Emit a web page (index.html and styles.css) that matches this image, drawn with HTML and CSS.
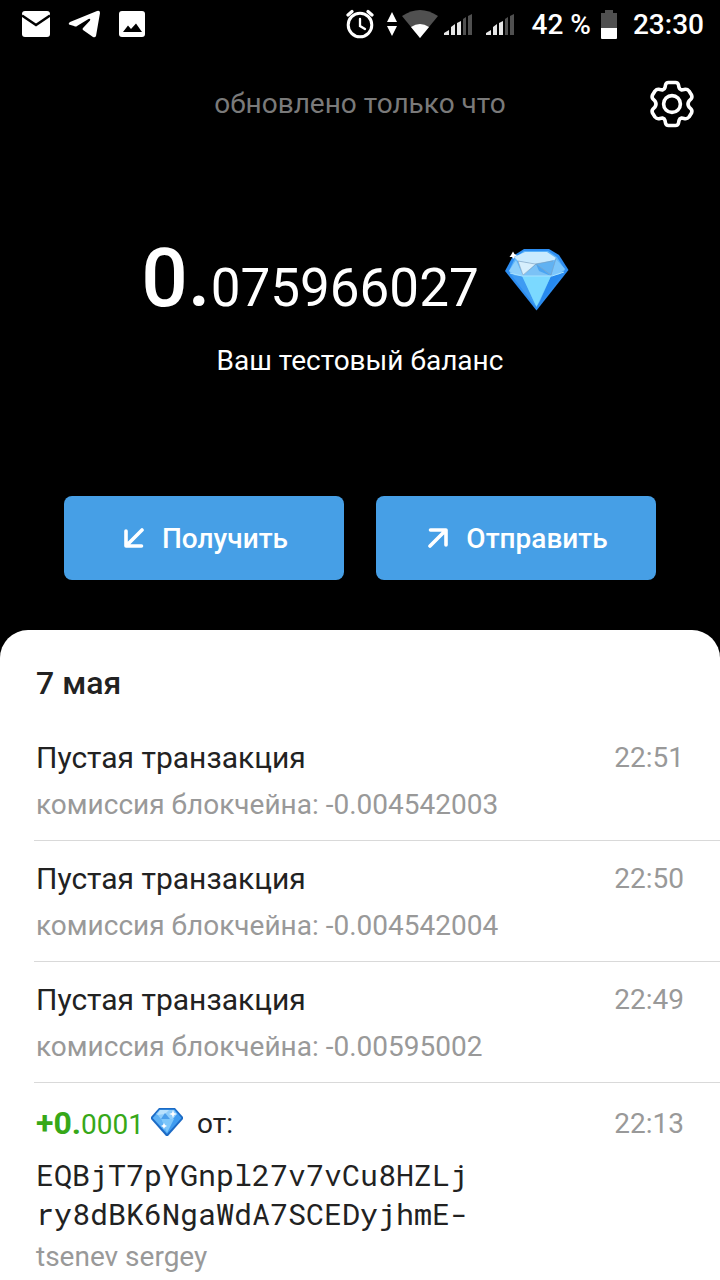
FILE: index.html
```html
<!DOCTYPE html>
<html lang="ru">
<head>
<meta charset="utf-8">
<meta name="viewport" content="width=device-width, initial-scale=1">
<title>Кошелёк</title>
<link rel="stylesheet" href="styles.css">
</head>
<body>
<header class="status">
  <div class="status-group status-left">
    <svg width="28" height="26" viewBox="0 0 28 26"><rect width="28" height="26" rx="3" fill="#fff"/><path d="M0 4.500 14 14 28 4.500" fill="none" stroke="#000" stroke-width="2.500"/></svg>
    <svg width="33" height="28" viewBox="0 0 33 28"><path fill="#fff" d="M2 12 29 1Q32 0 32 3L28 26Q27 28 25 27L15 20Q14 19 15 18L22 10.500Q23 8 20.500 9L9 16Q8 17 6 16L1 14.500Q0 13 2 12Z"/></svg>
    <svg width="26" height="26" viewBox="0 0 26 26"><rect width="26" height="26" rx="3" fill="#fff"/><path d="M4 21 9 14.500 12 18 17 12.500 23 21Z"/></svg>
  </div>
  <div class="status-group status-right">
    <svg width="28" height="30" viewBox="0 0 28 30" fill="none" stroke="#fff" stroke-linecap="round"><circle cx="14" cy="16" r="11.800" stroke-width="3"/><path stroke-width="2.300" d="M14 10V17L19 20"/><path stroke-width="3.200" d="M2 6 6 2.500M22 2.500 26 6"/></svg>
    <svg class="arrows" width="10" height="24" viewBox="0 0 10 24" fill="#fff"><path d="M0 10 5 0 10 10ZM0 14H10L5 24Z"/></svg>
    <svg class="wifi" width="36" height="28" viewBox="0 0 36 28"><path fill="#505050" d="M0 6Q18-6 36 6L18 28Z"/><path fill="#fff" d="M9 17Q18 11 27 17L18 28Z"/></svg>
    <svg width="28" height="21" viewBox="0 0 28 21"><path fill="#e6e6e6" d="M0 21V19L5 16V21ZM7 21V13L11 10V21ZM13 21V9L17 7V21Z"/><path fill="#505050" d="M19 21V5L22 3V21ZM24 21V2L28 0V21Z"/></svg>
    <svg class="signal" width="28" height="21" viewBox="0 0 28 21"><path fill="#e6e6e6" d="M0 21V19L5 16V21ZM7 21V13L11 10V21ZM13 21V9L17 7V21Z"/><path fill="#505050" d="M19 21V5L22 3V21ZM24 21V2L28 0V21Z"/></svg>
    <span class="percent">42 %</span>
    <svg width="16" height="29" viewBox="0 0 16 29"><path fill="#505050" d="M4 0H12V3H16V18H0V3H4Z"/><path fill="#fff" d="M0 18H16V28Q16 29 15 29H1Q0 29 0 28Z"/></svg>
    <time class="clock">23:30</time>
  </div>
</header>

<main class="wallet">
  <div class="topbar">
    <p class="updated">обновлено только что</p>
    <button class="settings" type="button" aria-label="Настройки">
      <svg width="48" height="48" viewBox="0 0 48 48" fill="none" stroke="#fff" stroke-width="3.600" stroke-linejoin="round"><circle cx="24" cy="24" r="8.400"/><path d="M20.500 2.500H27.500Q30 2.500 30.500 5L31 7.500Q31.500 9.500 33.500 10L36 9.500Q39 8.500 41 11L43.500 15Q44.500 17.500 43 19L41 21Q39 24 41 27L43 29Q44.500 30.500 43.500 33L41 37Q39 39.500 36 38.500L33.500 38Q31.500 38.500 31 40.500L30.500 43Q30 45.500 27.500 45.500H20.500Q18 45.500 17.500 43L17 40.500Q16.500 38.500 14.500 38L12 38.500Q9 39.500 7 37L4.500 33Q3.500 30.500 5 29L7 27Q9 24 7 21L5 19Q3.500 17.500 4.500 15L7 11Q9 8.500 12 9.500L14.500 10Q16.500 9.500 17 7.500L17.500 5Q18 2.500 20.500 2.500Z"/></svg>
    </button>
  </div>

  <section class="balance">
    <div class="amount">
      <span class="amount-text"><strong>0.</strong>075966027</span>
      <svg class="gem-large" viewBox="0 0 64 62">
        <path fill="#2d8df0" d="M19 0H44L54 6 63.500 21 31.500 61.500 0 22 8 7Z"/>
        <path fill="#5db4fa" d="M19 2H43L52 8 60 21 31.500 57 4 22 10 9Z"/>
        <path fill="#8fd0fb" d="M11 11 18 27 10 26 4 22Z"/>
        <path fill="#3d9bf3" d="M4 23 10 26.500 18 27 31 58Z"/>
        <path fill="#2689ee" d="M46 27 60 21.500 31.500 60Z"/>
        <path fill="#7bd9ff" d="M17 27H46L31.500 58Z"/>
        <path fill="#7cc6fb" d="M51 10 60 20 55 25 46 27Z"/>
        <path fill="#c9eafe" d="M9 8 20 3H42L51 9 48 13 30 15 13 12Z"/>
        <path fill="#d6effd" d="M13 12 31 15 18 27Z"/>
        <path fill="#61b2f2" d="M31 15 49 11 46 27Z"/>
        <path fill="#4ba5f2" d="M31 15 46 27H18Z"/>
        <path fill="#7bc2f6" d="M31 15 34 22 46 27H18Z"/>
        <path fill="none" stroke="#a8e2ff" d="M5 24 17 27H47L59 23"/>
        <path fill="none" stroke="#7f9fbc" stroke-width=".6" d="M13 12 30 15 48 12M13 12 18 26M31 15 18 26M31 15 46 26M51 9 46 26"/>
        <path fill="#fff" d="M8 2.500 9.500 5 12 6.500 9.500 7.500 9 10 7 8 4.500 8 6 6Z"/>
      </svg>
    </div>
    <p class="caption">Ваш тестовый баланс</p>
  </section>

  <div class="actions">
    <button class="action" type="button">
      <svg width="20" height="20" viewBox="0 0 20 20" fill="none" stroke="#fff" stroke-width="3.600" stroke-linecap="round" stroke-linejoin="round"><path d="M18 2 2.500 17.500M2 3V18H17.500"/></svg>
      Получить
    </button>
    <button class="action" type="button">
      <svg width="20" height="20" viewBox="0 0 20 20" fill="none" stroke="#fff" stroke-width="3.600" stroke-linecap="round" stroke-linejoin="round"><path d="M2 18 17.500 2.500M2.500 2H18V17"/></svg>
      Отправить
    </button>
  </div>

  <section class="sheet">
    <h2 class="day">7 мая</h2>
    <ul class="list">
      <li class="item">
        <div class="row"><span>Пустая транзакция</span><time>22:51</time></div>
        <p class="note">комиссия блокчейна: -0.004542003</p>
      </li>
      <li class="item">
        <div class="row"><span>Пустая транзакция</span><time>22:50</time></div>
        <p class="note">комиссия блокчейна: -0.004542004</p>
      </li>
      <li class="item">
        <div class="row"><span>Пустая транзакция</span><time>22:49</time></div>
        <p class="note">комиссия блокчейна: -0.00595002</p>
      </li>
      <li class="item incoming">
        <div class="row">
          <span class="from"><span class="plus"><strong>+0.</strong>0001</span>
          <svg class="gem-small" viewBox="0 0 32 28">
            <path fill="#1c6ac4" d="M8 0H24L32 9V11L17 28H15L0 11V9Z"/>
            <path fill="#3f9cf0" d="M8.500 1.500H23.500L30.500 10 16 26 1.500 10Z"/>
            <path fill="#8fcdfa" d="M9 2H23L26 6 22 11H9L5 6Z"/>
            <path fill="#5fb2f5" d="M2 10 6 6 10 11 16 25Z"/>
            <path fill="#7cc6fa" d="M10 11H23L16 25Z"/>
            <path fill="#b9e2fd" d="M9 2H18L14 6 6 7Z"/>
            <path fill="#4a9eea" d="M14 5 19 11H10Z"/>
            <path fill="#fff" d="M22 2 23 5 26 6 23 7 22 10 21 7 18 6 21 5ZM13 15 14 17 16 18 14 19 13 21 12 19 10 18 12 17Z"/>
          </svg><span>от:</span></span>
          <time>22:13</time>
        </div>
        <p class="address">EQBjT7pYGnpl27v7vCu8HZLj<br>ry8dBK6NgaWdA7SCEDyjhmE-</p>
        <p class="note">tsenev sergey</p>
      </li>
    </ul>
  </section>
</main>
</body>
</html>
```
FILE: styles.css
```css
* { box-sizing: border-box; }
body {
  margin: 0;
  min-height: 100vh;
  display: flex;
  flex-direction: column;
  background: #000;
  color: #fff;
  font-family: Roboto, "Noto Sans", sans-serif;
}
p, h2, ul { margin: 0; padding: 0; }
svg { flex: none; display: block; }
button { border: 0; font: inherit; color: inherit; cursor: pointer; }

.status {
  height: 50px;
  padding: 0 16px 2px 22px;
  display: flex;
  align-items: center;
  justify-content: space-between;
  font-size: 28px;
  font-weight: 500;
}
.status-group { display: flex; align-items: center; }
.status-left { gap: 18px; }
.arrows { margin: 0 5px 0 13px; }
.wifi { margin-right: 6px; }
.signal { margin-left: 14px; }
.percent { margin: 0 10px 0 18px; }
.clock { margin-left: 16px; }

.wallet { flex: 1; display: flex; flex-direction: column; }
.topbar {
  display: grid;
  grid-template-columns: 48px 1fr 48px;
  align-items: center;
  padding: 30px 24px 0;
}
.updated {
  grid-column: 2;
  text-align: center;
  font-size: 28px;
  line-height: 36px;
  color: #7a7a7a;
}
.settings { padding: 0; background: none; }

.balance { padding-top: 100px; text-align: center; }
.amount {
  display: flex;
  align-items: center;
  justify-content: center;
  gap: 26px;
  padding-right: 10px;
}
.amount-text { font-size: 53px; line-height: 100px; }
.amount-text strong { font-size: 82px; font-weight: 500; }
.gem-large { width: 64px; height: 62px; margin-bottom: 6px; }
.caption { margin-top: 5px; font-size: 28px; line-height: 36px; }

.actions {
  display: grid;
  grid-template-columns: 1fr 1fr;
  gap: 32px;
  padding: 117px 64px 50px;
}
.action {
  height: 84px;
  padding: 0 4px 0 8px;
  display: flex;
  align-items: center;
  justify-content: center;
  gap: 18px;
  border-radius: 8px;
  background: #469fe6;
  font-size: 28px;
  font-weight: 500;
}

.sheet {
  flex: 1;
  padding: 33px 0 0 34px;
  border-radius: 28px 28px 0 0;
  background: #fff;
  color: #222;
}
.day { padding: 0 2px 17px; font-size: 32px; line-height: 40px; font-weight: 500; }
.list { list-style: none; }
.item { padding: 18px 36px 16px 2px; border-bottom: 1px solid #d9d9d9; }
.item:last-child { border-bottom: 0; padding-bottom: 0; }
.row {
  display: flex;
  align-items: center;
  justify-content: space-between;
  font-size: 30px;
  line-height: 40px;
}
.row time { font-size: 28px; color: #999; }
.note { margin-top: 8px; font-size: 28px; line-height: 38px; color: #999; }
.incoming { padding-top: 20px; }
.from { display: flex; align-items: center; font-size: 28px; }
.plus { color: #37a818; }
.plus strong { font-size: 32px; font-weight: 700; }
.gem-small { width: 32px; height: 28px; margin: 0 14px 4px 7px; }
.address {
  margin-top: 10px;
  font-family: "Roboto Mono", "DejaVu Sans Mono", "Liberation Mono", monospace;
  font-size: 30px;
  line-height: 39px;
}
.incoming .note { margin-top: 5px; }
```
